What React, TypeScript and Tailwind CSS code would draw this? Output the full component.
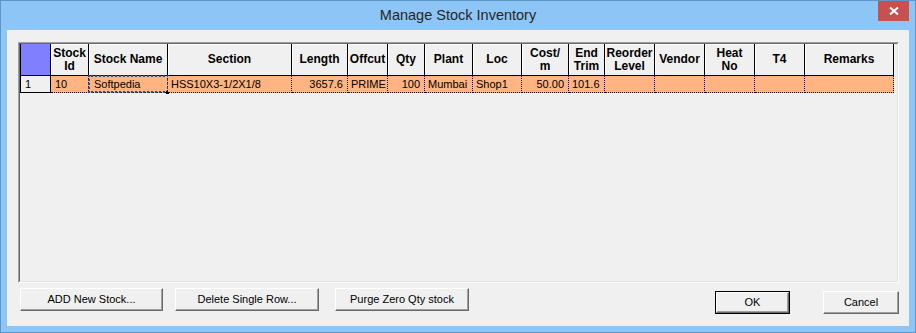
import React from "react";

type Col = { w: number; label: string[]; align?: "left" | "right" };

const cols: Col[] = [
  { w: 38, label: ["Stock", "Id"] },
  { w: 79, label: ["Stock Name"] },
  { w: 124, label: ["Section"] },
  { w: 56, label: ["Length"], align: "right" },
  { w: 40, label: ["Offcut"] },
  { w: 37, label: ["Qty"], align: "right" },
  { w: 48, label: ["Plant"] },
  { w: 49, label: ["Loc"] },
  { w: 47, label: ["Cost/", "m"], align: "right" },
  { w: 36, label: ["End", "Trim"] },
  { w: 50, label: ["Reorder", "Level"] },
  { w: 50, label: ["Vendor"] },
  { w: 50, label: ["Heat", "No"] },
  { w: 50, label: ["T4"] },
  { w: 89, label: ["Remarks"] },
];

const row = ["10", "Softpedia", "HSS10X3-1/2X1/8", "3657.6", "PRIME", "100", "Mumbai", "Shop1", "50.00", "101.6", "", "", "", "", ""];

function Btn({ label, w, def }: { label: string; w: number; def?: boolean }) {
  const inner = (
    <div className="flex-1 flex items-center justify-center border-t border-l border-t-white border-l-white border-b border-r border-b-[#696969] border-r-[#696969] shadow-[inset_-1px_-1px_0_#a0a0a0] bg-[#f0f0f0] text-[11px] text-black">
      {label}
    </div>
  );
  return (
    <div
      className={"h-[23px] flex " + (def ? "border border-black" : "")}
      style={{ width: w }}
    >
      {inner}
    </div>
  );
}

export default function App() {
  return (
    <div
      className="w-[916px] h-[333px] border border-[#5e96c8] bg-[#8cc5f6] flex flex-col"
      style={{ fontFamily: '"Liberation Sans", Arial, sans-serif' }}
    >
      {/* Title bar */}
      <div className="relative h-[29px] flex items-center justify-center">
        <span className="text-[14.5px] text-[#262626] pt-[1px]">Manage Stock Inventory</span>
        <div className="absolute top-0 right-[6px] w-[31px] h-[20px] bg-[#c75050] flex items-center justify-center">
          <svg width="10" height="8" viewBox="0 0 10 8">
            <path d="M1 0.5 L9 7.5 M9 0.5 L1 7.5" stroke="#fff" strokeWidth="2" />
          </svg>
        </div>
      </div>
      {/* Client */}
      <div className="mx-[6px] h-[296px] bg-[#f0f0f0] pt-[12px] pl-[11px] pr-[10px] flex flex-col">
        {/* Grid */}
        <div className="h-[241px] border-t border-l border-t-[#a0a0a0] border-l-[#a0a0a0] border-b border-r border-b-white border-r-white">
          <div className="h-full border-t border-l border-t-[#696969] border-l-[#696969] border-b border-r border-b-[#e3e3e3] border-r-[#e3e3e3] bg-[#f0f0f0]">
            {/* Header */}
            <div className="flex h-[32px]">
              <div className="w-[31px] border-l border-r border-b border-black bg-[#8080ff]" />
              {cols.map((c, i) => (
                <div
                  key={i}
                  className="border-r border-b border-black bg-[#f0f0f0] shadow-[inset_1px_1px_0_#ffffff] flex flex-col justify-center overflow-hidden"
                  style={{ width: c.w }}
                >
                  {c.label.map((l, j) => (
                    <div
                      key={j}
                      className="text-center whitespace-nowrap text-[12px] leading-[13px] font-bold text-black"
                    >
                      {l}
                    </div>
                  ))}
                </div>
              ))}
            </div>
            {/* Data row */}
            <div className="flex h-[17px]">
              <div className="w-[31px] border-l border-r border-b border-black bg-[#f0f0f0] text-[11px] leading-[16px] pl-[4px] text-black">
                1
              </div>
              {cols.map((c, i) => (
                <div
                  key={i}
                  className={
                    "relative border-r border-b border-dotted border-black bg-[#ffb482] text-[11px] leading-[16px] text-black whitespace-nowrap overflow-visible px-[3px] " +
                    (c.align === "right" ? "text-right pr-[4px]" : "text-left")
                  }
                  style={{ width: c.w }}
                >
                  {i === 1 ? (
                    <>
                      <span className="pl-[2px]">{row[i]}</span>
                      <div className="absolute left-[-1px] top-[-1px] right-[-2px] bottom-[-1px] border-2 border-dotted border-[#1b4f7e]" />
                      <div className="absolute right-[-2px] bottom-[-2px] w-[3px] h-[3px] bg-black" />
                    </>
                  ) : i === 0 ? (
                    <span className="pl-[1px]">{row[i]}</span>
                  ) : (
                    row[i]
                  )}
                </div>
              ))}
            </div>
          </div>
        </div>
        {/* Buttons */}
        <div className="flex items-start mt-[5px] pl-[2px]">
          <Btn label="ADD New Stock..." w={143} />
          <div className="w-[12px]" />
          <Btn label="Delete Single Row..." w={144} />
          <div className="w-[16px]" />
          <Btn label="Purge Zero Qty stock" w={134} />
          <div className="flex-1" />
          <div className="mt-[3px] flex">
            <Btn label="OK" w={75} def />
            <div className="w-[33px]" />
            <Btn label="Cancel" w={76} />
          </div>
        </div>
      </div>
    </div>
  );
}
